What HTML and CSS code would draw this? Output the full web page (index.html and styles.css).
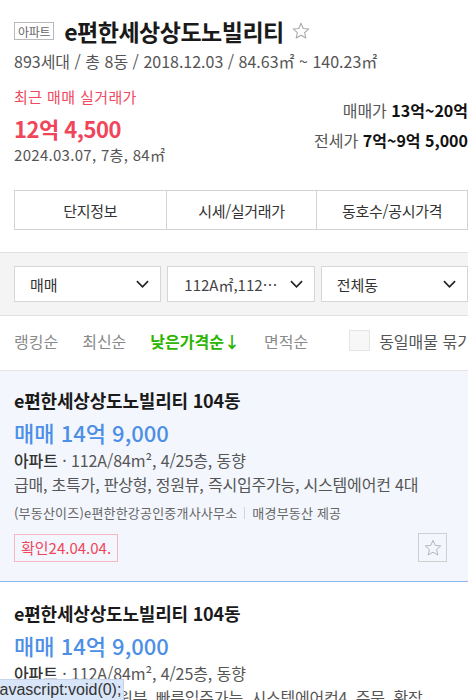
FILE: index.html
```html
<!DOCTYPE html>
<html lang="ko">
<head>
<meta charset="utf-8">
<title>e편한세상상도노빌리티</title>
<link rel="stylesheet" href="styles.css">
</head>
<body>
<div class="page">
  <header class="head">
    <div class="title-row">
      <span class="tag">아파트</span>
      <h1 class="title">e편한세상상도노빌리티</h1>
      <svg class="title-star" viewBox="0 0 24 24" width="20" height="20"><path d="M12 2.8l2.7 6.1 6.6.6-5 4.4 1.5 6.5L12 17l-5.8 3.4 1.5-6.5-5-4.4 6.6-.6z" fill="none" stroke="#a9a9a9" stroke-width="1.3" stroke-linejoin="round"/></svg>
    </div>
    <p class="meta">893세대 / 총 8동 / 2018.12.03 / 84.63㎡ ~ 140.23㎡</p>
    <div class="price-area">
      <div class="recent">
        <p class="recent-label">최근 매매 실거래가</p>
        <p class="recent-price">12억 4,500</p>
        <p class="recent-date">2024.03.07, 7층, 84㎡</p>
      </div>
      <div class="ranges">
        <p class="range">매매가 <b>13억~20억</b></p>
        <p class="range">전세가 <b>7억~9억 5,000</b></p>
      </div>
    </div>
    <nav class="tabs">
      <a class="tab">단지정보</a>
      <a class="tab">시세/실거래가</a>
      <a class="tab">동호수/공시가격</a>
    </nav>
  </header>

  <section class="filters">
    <div class="select"><span>매매</span><svg viewBox="0 0 14 8" width="13" height="8"><path d="M1 1l6 6 6-6" fill="none" stroke="#222" stroke-width="1.8"/></svg></div>
    <div class="select"><span>112A㎡,112⋯</span><svg viewBox="0 0 14 8" width="13" height="8"><path d="M1 1l6 6 6-6" fill="none" stroke="#222" stroke-width="1.8"/></svg></div>
    <div class="select"><span>전체동</span><svg viewBox="0 0 14 8" width="13" height="8"><path d="M1 1l6 6 6-6" fill="none" stroke="#222" stroke-width="1.8"/></svg></div>
  </section>

  <div class="sort">
    <a class="sort-item">랭킹순</a>
    <span class="sep"></span>
    <a class="sort-item">최신순</a>
    <span class="sep"></span>
    <a class="sort-item active">낮은가격순↓</a>
    <span class="sep"></span>
    <a class="sort-item">면적순</a>
    <label class="group"><span class="check"></span>동일매물 묶기</label>
  </div>

  <ul class="list">
    <li class="item selected">
      <p class="item-title">e편한세상상도노빌리티 104동</p>
      <p class="item-price">매매 14억 9,000</p>
      <p class="item-spec"><b>아파트</b> · 112A/84m², 4/25층, 동향</p>
      <p class="item-desc">급매, 초특가, 판상형, 정원뷰, 즉시입주가능, 시스템에어컨 4대</p>
      <p class="item-agent">(부동산이즈)e편한한강공인중개사사무소<span class="bar"></span>매경부동산 제공</p>
      <div class="item-foot">
        <span class="confirm">확인24.04.04.</span>
        <button class="fav"><svg viewBox="0 0 24 24" width="20" height="20"><path d="M12 2.8l2.7 6.1 6.6.6-5 4.4 1.5 6.5L12 17l-5.8 3.4 1.5-6.5-5-4.4 6.6-.6z" fill="none" stroke="#b5b5b5" stroke-width="1.2" stroke-linejoin="round"/></svg></button>
      </div>
    </li>
    <li class="item">
      <p class="item-title">e편한세상상도노빌리티 104동</p>
      <p class="item-price">매매 14억 9,000</p>
      <p class="item-spec"><b>아파트</b> · 112A/84m², 4/25층, 동향</p>
      <p class="item-desc">급매, 초특가, 공원뷰, 빠른입주가능, 시스템에어컨4, 주문, 확장</p>
    </li>
  </ul>
</div>
<div class="status">javascript:void(0);</div>
</body>
</html>
```

FILE: styles.css
```css
html, body {
  margin: 0;
  padding: 0;
  overflow: hidden;
  background: #fff;
}
body {
  font-family: "Noto Sans CJK KR", "Noto Sans", sans-serif;
  color: #222;
}
p, h1, ul { margin: 0; padding: 0; }
ul { list-style: none; }

.page {
  width: 482px;
}

.head {
  padding: 16px 14px 0;
}
.title-row {
  display: flex;
  align-items: center;
  height: 30px;
}
.tag {
  display: inline-flex;
  align-items: center;
  height: 16px;
  padding: 0 3px;
  border: 1px solid #b9b9b9;
  font-size: 12px;
  color: #666;
  letter-spacing: -0.3px;
}
.title {
  margin-left: 10px;
  font-size: 23px;
  font-weight: 700;
  letter-spacing: -0.5px;
  line-height: 30px;
  color: #1a1a1a;
}
.title-star {
  margin-left: 7px;
}
.meta {
  margin-top: 5px;
  font-size: 16px;
  line-height: 20px;
  color: #555;
}

.price-area {
  display: flex;
  justify-content: space-between;
  margin-top: 16px;
}
.recent-label {
  font-size: 15px;
  line-height: 20px;
  color: #f04a60;
  letter-spacing: 0.4px;
}
.recent-price {
  margin-top: 6px;
  font-size: 22px;
  font-weight: 700;
  line-height: 30px;
  color: #f0455a;
  letter-spacing: -0.5px;
}
.recent-date {
  margin-top: 2px;
  font-size: 15px;
  line-height: 20px;
  color: #555;
  letter-spacing: 0.3px;
}
.ranges {
  margin-top: 8px;
  text-align: right;
}
.range {
  font-size: 16px;
  line-height: 30px;
  color: #555;
}
.range b {
  color: #111;
  font-weight: 700;
}

.tabs {
  display: grid;
  grid-template-columns: repeat(3, 1fr);
  margin-top: 25px;
  border: 1px solid #d3d3d3;
  height: 38px;
}
.tab {
  display: flex;
  align-items: center;
  justify-content: center;
  font-size: 15px;
  color: #333;
  letter-spacing: -0.3px;
}
.tab + .tab {
  border-left: 1px solid #d3d3d3;
}

.filters {
  margin-top: 22px;
  background: #f4f4f4;
  border-top: 1px solid #e0e0e0;
  border-bottom: 1px solid #e0e0e0;
  padding: 13px 14px;
  display: grid;
  grid-template-columns: repeat(3, 1fr);
  gap: 6px;
}
.select {
  height: 34px;
  background: #fff;
  border: 1px solid #d6d6d6;
  display: flex;
  align-items: center;
  justify-content: space-between;
  padding: 0 11px 0 15px;
  font-size: 15px;
  color: #333;
}
.select:nth-child(2) span { padding-left: 1px; color: #444; }

.sort {
  height: 49px;
  padding: 0 14px 5px;
  display: flex;
  align-items: center;
  border-bottom: 1px solid #e3e3e3;
  white-space: nowrap;
}
.sort-item {
  font-size: 16px;
  color: #8a8a8a;
}
.sort-item.active {
  color: #2bb400;
  font-weight: 700;
}
.sep {
  width: 1px;
  height: 13px;
  background: #e0e0e0;
  margin: 0 12px;
}
.group {
  display: flex;
  align-items: center;
  margin-left: 41px;
  font-size: 16px;
  color: #555;
}
.check {
  width: 19px;
  height: 19px;
  border: 1px solid #e4e4e4;
  background: #f7f7f7;
  margin-right: 9px;
}

.item {
  padding: 17px 14px 19px;
  border-bottom: 1px solid #e3e3e3;
}
.item + .item {
  padding-top: 19px;
}
.item.selected {
  background: #f3f7fd;
  border-bottom: 1px solid #8cb6ee;
}
.item-title {
  font-size: 18px;
  font-weight: 700;
  line-height: 24px;
  color: #1a1a1a;
  letter-spacing: -0.2px;
}
.item-price {
  margin-top: 6px;
  font-size: 22px;
  font-weight: 500;
  line-height: 28px;
  color: #4d8fe6;
}
.item-spec {
  margin-top: 2px;
  font-size: 16px;
  line-height: 24px;
  color: #555;
  letter-spacing: -0.1px;
}
.item-spec b {
  color: #333;
  font-weight: 500;
}
.item-desc {
  margin-top: 0;
  font-size: 16px;
  line-height: 24px;
  color: #555;
  letter-spacing: -0.2px;
  white-space: nowrap;
}
.item-agent {
  margin-top: 7px;
  font-size: 13px;
  line-height: 20px;
  color: #666;
  letter-spacing: 0.2px;
  display: flex;
  align-items: center;
}
.bar {
  width: 1px;
  height: 12px;
  background: #d4d4d4;
  margin: 0 7px;
}
.item-foot {
  margin-top: 10px;
  display: flex;
  align-items: center;
  justify-content: space-between;
  padding-right: 21px;
}
.confirm {
  display: inline-flex;
  align-items: center;
  height: 26px;
  padding: 0 6px;
  border: 1px solid #f5b7c0;
  color: #f0455a;
  font-size: 15px;
}
.fav {
  width: 29px;
  height: 29px;
  padding: 0;
  border: 1px solid #cfcfcf;
  background: #f3f7fd;
  display: flex;
  align-items: center;
  justify-content: center;
}

.status {
  position: fixed;
  left: 0;
  bottom: 0;
  height: 20px;
  width: 121px;
  padding-left: 2px;
  overflow: hidden;
  background: #d9e5f8;
  border-top: 1px solid #c6d4ea;
  border-right: 1px solid #c6d4ea;
  font-family: "Liberation Sans", "Noto Sans", sans-serif;
  font-size: 16px;
  line-height: 20px;
  color: #333;
  text-indent: -6px;
  white-space: nowrap;
}
```
